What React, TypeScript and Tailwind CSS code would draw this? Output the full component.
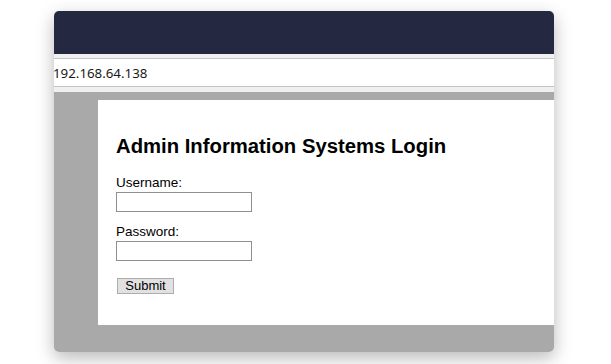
export default function App() {
  return (
    <div className="w-[611px] h-[364px] bg-white overflow-hidden pt-[11px] pl-[54px]" style={{ fontFamily: '"Liberation Sans", Arial, sans-serif' }}>
      {/* browser window */}
      <div className="w-[500px] h-[341px] rounded-[5px] overflow-hidden flex flex-col shadow-[0_6px_18px_rgba(0,0,0,0.28)]">
        <div className="h-[43px] bg-[#252841] shrink-0" />
        <div className="h-[4px] bg-[#f0f0f0] shrink-0" />
        <div className="h-[29px] bg-white border-y border-[#c4c4c4] flex items-center shrink-0">
          <span className="ml-[-1px] mt-[2px] text-[13.3px] text-[#1a1a1a]" style={{ fontFamily: '"Noto Sans", "Liberation Sans", sans-serif' }}>
            192.168.64.138
          </span>
        </div>
        <div className="h-[5px] bg-[#f0f0f0] shrink-0" />
        <div className="flex-1 bg-[#a9a9a9] pt-[8px] pl-[44px]">
          {/* login panel */}
          <div className="h-[225px] bg-white pl-[18px] pt-[34px] flex flex-col items-start text-black">
            <h1 className="text-[20.3px] leading-[24px] font-bold">Admin Information Systems Login</h1>
            <label className="mt-[17px] text-[13.5px] leading-[16px]">Username:</label>
            <input type="text" className="mt-[1px] w-[136px] h-[20px] border border-[#8f8f8f] bg-white" />
            <label className="mt-[12px] text-[13.5px] leading-[16px]">Password:</label>
            <input type="password" className="mt-[1px] w-[136px] h-[20px] border border-[#8f8f8f] bg-white" />
            <button className="mt-[17px] ml-[1px] w-[57px] h-[16px] bg-[#e1e1e1] border border-[#adadad] text-[13px] leading-[14px]">
              Submit
            </button>
          </div>
        </div>
      </div>
    </div>
  );
}
